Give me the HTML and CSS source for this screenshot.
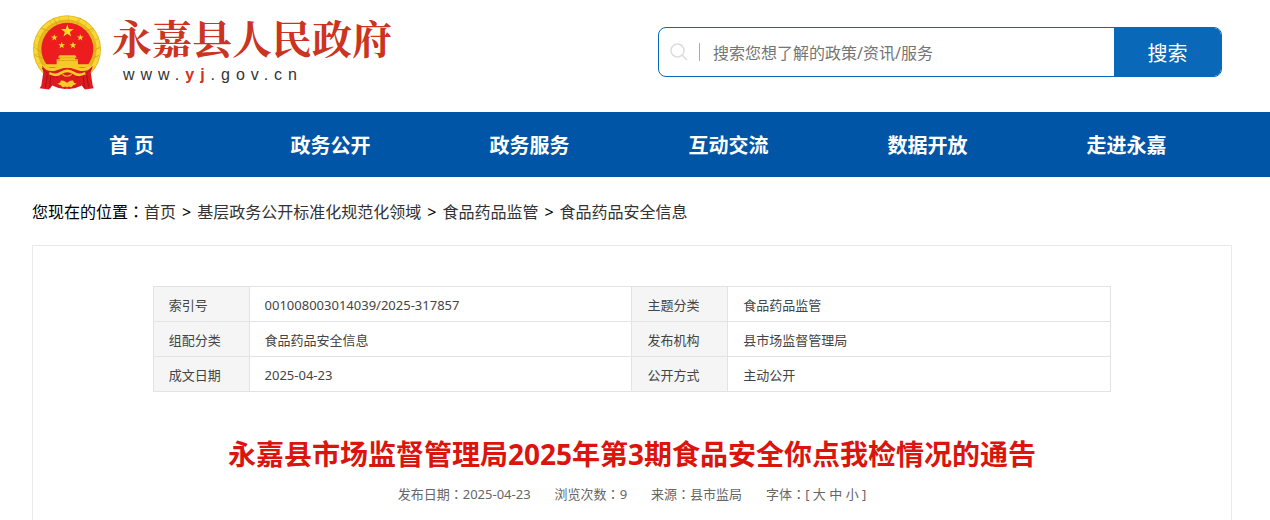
FILE: index.html
```html
<!DOCTYPE html>
<html lang="zh-CN">
<head>
    <meta charset="UTF-8">
    <meta name="viewport" content="width=device-width, initial-scale=1.0">
    <title>永嘉县市场监督管理局2025年第3期食品安全你点我检情况的通告</title>
    <link rel="stylesheet" href="styles.css">
</head>
<body>
    <header class="wrap header">
        <a class="logo" href="#">
            <svg class="emblem" viewBox="36 26 210 230" aria-hidden="true">
                <!-- 麦穗外环 -->
                <circle cx="141" cy="131" r="102" fill="#e8b820"/>
                <circle cx="141" cy="131" r="94" fill="none" stroke="#f7d935" stroke-width="10" stroke-dasharray="26 2"/>
                <circle cx="141" cy="131" r="86" fill="none" stroke="#e3ac1c" stroke-width="2"/>
                <path d="M42 124l24 18M216 142l24-18M44 150l26 8M212 158l26-8M62 68l26 10M220 68l-26 10M100 38l12 20M182 38l-12 20" stroke="#d29a18" stroke-width="2"/>
                <circle cx="142" cy="130" r="78" fill="#ed1c1f"/>
                <!-- 五星 -->
                <g fill="#fcdb2c">
                    <path d="M142 57l4.700 13.500 14.300.3-11.400 8.600 4.100 13.700-11.700-8.200-11.700 8.200 4.100-13.700-11.400-8.600 14.300-.3z"/>
                    <path d="M103 86l2.600 7 7.400.2-5.900 4.500 2.100 7.200-6.200-4.200-6.200 4.200 2.100-7.200-5.900-4.500 7.400-.2z"/>
                    <path d="M181 86l2.600 7 7.400.2-5.900 4.500 2.100 7.200-6.200-4.200-6.200 4.200 2.100-7.200-5.900-4.500 7.400-.2z"/>
                    <path d="M125 109l2.600 7 7.400.2-5.900 4.500 2.100 7.200-6.200-4.200-6.200 4.200 2.100-7.200-5.900-4.500 7.400-.2z"/>
                    <path d="M159 109l2.600 7 7.400.2-5.900 4.500 2.100 7.200-6.200-4.200-6.200 4.200 2.100-7.200-5.900-4.500 7.400-.2z"/>
                </g>
                <!-- 绶带 -->
                <path d="M66 182q36 10 76 10t76-10l-6 18 6 40 3 8-26 4-10-12q-22 12-44 10-22 2-44-10l-10 12-28-4 5-8 6-40z" fill="#dd1a20"/>
                <path d="M82 208l-6 38M92 214l-3 34M200 208l6 38M190 214l3 34" stroke="#a90f18" stroke-width="3"/>
                <path d="M66 188q20 26 48 28M216 188q-20 26-48 28" fill="none" stroke="#b8131a" stroke-width="3"/>
                <!-- 天安门 -->
                <path d="M118 149h48l4 8h-5v4h9v15h34l-6 10H84l-8-10h34v-15h9v-4h-5z" fill="#f5c928"/>
                <path d="M117 157h50M110 165h64" stroke="#d99a1a" stroke-width="2"/>
                <path d="M72 180q8 14 30 12l16-5q24-9 48 0l16 5q22 2 30-12" fill="none" stroke="#f6cb2a" stroke-width="9"/>
                <path d="M88 203q20 10 34 0 20-14 40 0 14 10 34 0" fill="none" stroke="#f6cb2a" stroke-width="8"/>
                <!-- 齿轮 -->
                <path d="M112 235l8-3 3-7 8 1 10 6 10-6 8-1 3 7 8 3-10 4-6 6-9-2-4 3-4-3-9 2-6-6z" fill="#f6cb2a"/>
                <path d="M127 206q14 12 28 0" fill="none" stroke="#e6ab1e" stroke-width="4"/>
            </svg>
            <span class="logo-text">
                <span class="logo-name">永嘉县人民政府</span>
                <span class="logo-url">www.<b>yj</b>.gov.cn</span>
            </span>
        </a>
        <form class="search">
            <svg class="search-icon" viewBox="0 0 18 18" aria-hidden="true">
                <circle cx="7.500" cy="7.500" r="6.500"/>
                <path d="M12 12l5 5"/>
            </svg>
            <input class="search-input" type="text" placeholder="搜索您想了解的政策/资讯/服务" aria-label="搜索">
            <button class="search-btn" type="button">搜索</button>
        </form>
    </header>

    <nav class="nav">
        <div class="wrap nav-list">
            <a href="#">首 页</a>
            <a href="#">政务公开</a>
            <a href="#">政务服务</a>
            <a href="#">互动交流</a>
            <a href="#">数据开放</a>
            <a href="#">走进永嘉</a>
        </div>
    </nav>

    <div class="wrap crumbs">
        <span>您现在的位置<span lang="zh-TW" class="colon">：</span></span>
        <a href="#">首页</a>
        <span class="sep">&gt;</span>
        <a href="#">基层政务公开标准化规范化领域</a>
        <span class="sep">&gt;</span>
        <a href="#">食品药品监管</a>
        <span class="sep">&gt;</span>
        <a href="#">食品药品安全信息</a>
    </div>

    <main class="wrap article">
        <table class="info">
            <tr>
                <th scope="row">索引号</th>
                <td>001008003014039/2025-317857</td>
                <th scope="row">主题分类</th>
                <td>食品药品监管</td>
            </tr>
            <tr>
                <th scope="row">组配分类</th>
                <td>食品药品安全信息</td>
                <th scope="row">发布机构</th>
                <td>县市场监督管理局</td>
            </tr>
            <tr>
                <th scope="row">成文日期</th>
                <td>2025-04-23</td>
                <th scope="row">公开方式</th>
                <td>主动公开</td>
            </tr>
        </table>
        <h1>永嘉县市场监督管理局2025年第3期食品安全你点我检情况的通告</h1>
        <div class="meta">
            <span>发布日期<span lang="zh-TW" class="colon">：</span>2025-04-23</span>
            <span>浏览次数<span lang="zh-TW" class="colon">：</span>9</span>
            <span>来源<span lang="zh-TW" class="colon">：</span>县市监局</span>
            <span>字体<span lang="zh-TW" class="colon">：</span>[ <a href="#">大</a> <a href="#">中</a> <a href="#">小</a> ]</span>
        </div>
    </main>
</body>
</html>
```
FILE: styles.css
```css
* {
    box-sizing: border-box;
}

body {
    margin: 0;
    background: #fff;
    color: #000;
    font-family: "Microsoft YaHei", "Noto Sans", "Noto Sans CJK SC", sans-serif;
    font-size: 16px;
}

a {
    color: inherit;
    text-decoration: none;
}

.wrap {
    margin: 0 38px 0 32px;
}

/* 冒号居中 */
.colon {
    font-family: "Noto Sans CJK TC", sans-serif;
    line-height: 1;
}

/* 头部 */
.header {
    display: flex;
    justify-content: space-between;
    align-items: flex-start;
    height: 112px;
    padding: 14px 10px 0 0;
}

.logo {
    display: flex;
    gap: 10px;
}

.emblem {
    width: 70px;
    height: 77px;
}

.logo-text {
    display: flex;
    flex-direction: column;
}

.logo-name {
    color: #cb3420;
    font-family: "Noto Serif CJK SC", "Noto Sans CJK SC", serif;
    font-size: 40px;
    font-weight: bold;
    line-height: 46px;
}

.logo-url {
    padding-left: 11px;
    color: #333;
    font-family: "Liberation Sans", Arial, sans-serif;
    font-size: 16px;
    line-height: 30px;
    letter-spacing: 6px;
}

.logo-url b {
    color: #d5301c;
}

.search {
    display: flex;
    align-items: center;
    width: 564px;
    height: 50px;
    margin-top: 13px;
    border: 1px solid #0a68b8;
    border-radius: 8px;
    overflow: hidden;
}

.search-icon {
    flex: none;
    width: 18px;
    height: 18px;
    margin: 0 11px;
    fill: none;
    stroke: #ddd;
    stroke-width: 1.5;
}

.search-input {
    flex: 1;
    min-width: 0;
    height: 18px;
    padding: 2px 13px 0;
    border: 0;
    border-left: 1px solid #aaa;
    outline: 0;
    font-family: inherit;
    font-size: 16px;
}

.search-input::placeholder {
    color: #757575;
}

.search-btn {
    width: 107px;
    height: 50px;
    border: 0;
    background: #0a68b8;
    color: #fff;
    font-family: inherit;
    font-size: 20px;
}

/* 导航 */
.nav {
    background: #0055a6;
}

.nav-list {
    display: grid;
    grid-template-columns: repeat(6, 1fr);
    padding: 2px 6px 0 0;
}

.nav-list a {
    color: #fff;
    font-size: 20px;
    font-weight: bold;
    line-height: 63px;
    text-align: center;
}

/* 当前位置 */
.crumbs {
    display: flex;
    flex-wrap: wrap;
    padding: 20px 0 18px;
    line-height: 30px;
}

.crumbs a {
    color: #333;
}

.crumbs .sep {
    padding: 0 6px;
}

/* 正文 */
.article {
    padding: 40px 0;
    border: 1px solid #eaeaea;
}

.info {
    width: 80%;
    margin: 0 auto;
    border-collapse: collapse;
    table-layout: fixed;
    color: #444;
    font-size: 13px;
    line-height: 20px;
}

.info th,
.info td {
    height: 35px;
    padding: 2px 15px 0;
    border: 1px solid #e3e3e3;
    font-weight: normal;
    text-align: left;
}

.info th {
    width: 10%;
    background: #f5f5f5;
}

.info td {
    width: 40%;
}

h1 {
    margin: 41px 0 9px;
    color: #db140d;
    font-size: 28px;
    line-height: 42px;
    text-align: center;
}

.meta {
    display: flex;
    justify-content: center;
    gap: 24px;
    color: #666;
    font-size: 13px;
    line-height: 20px;
}
```
